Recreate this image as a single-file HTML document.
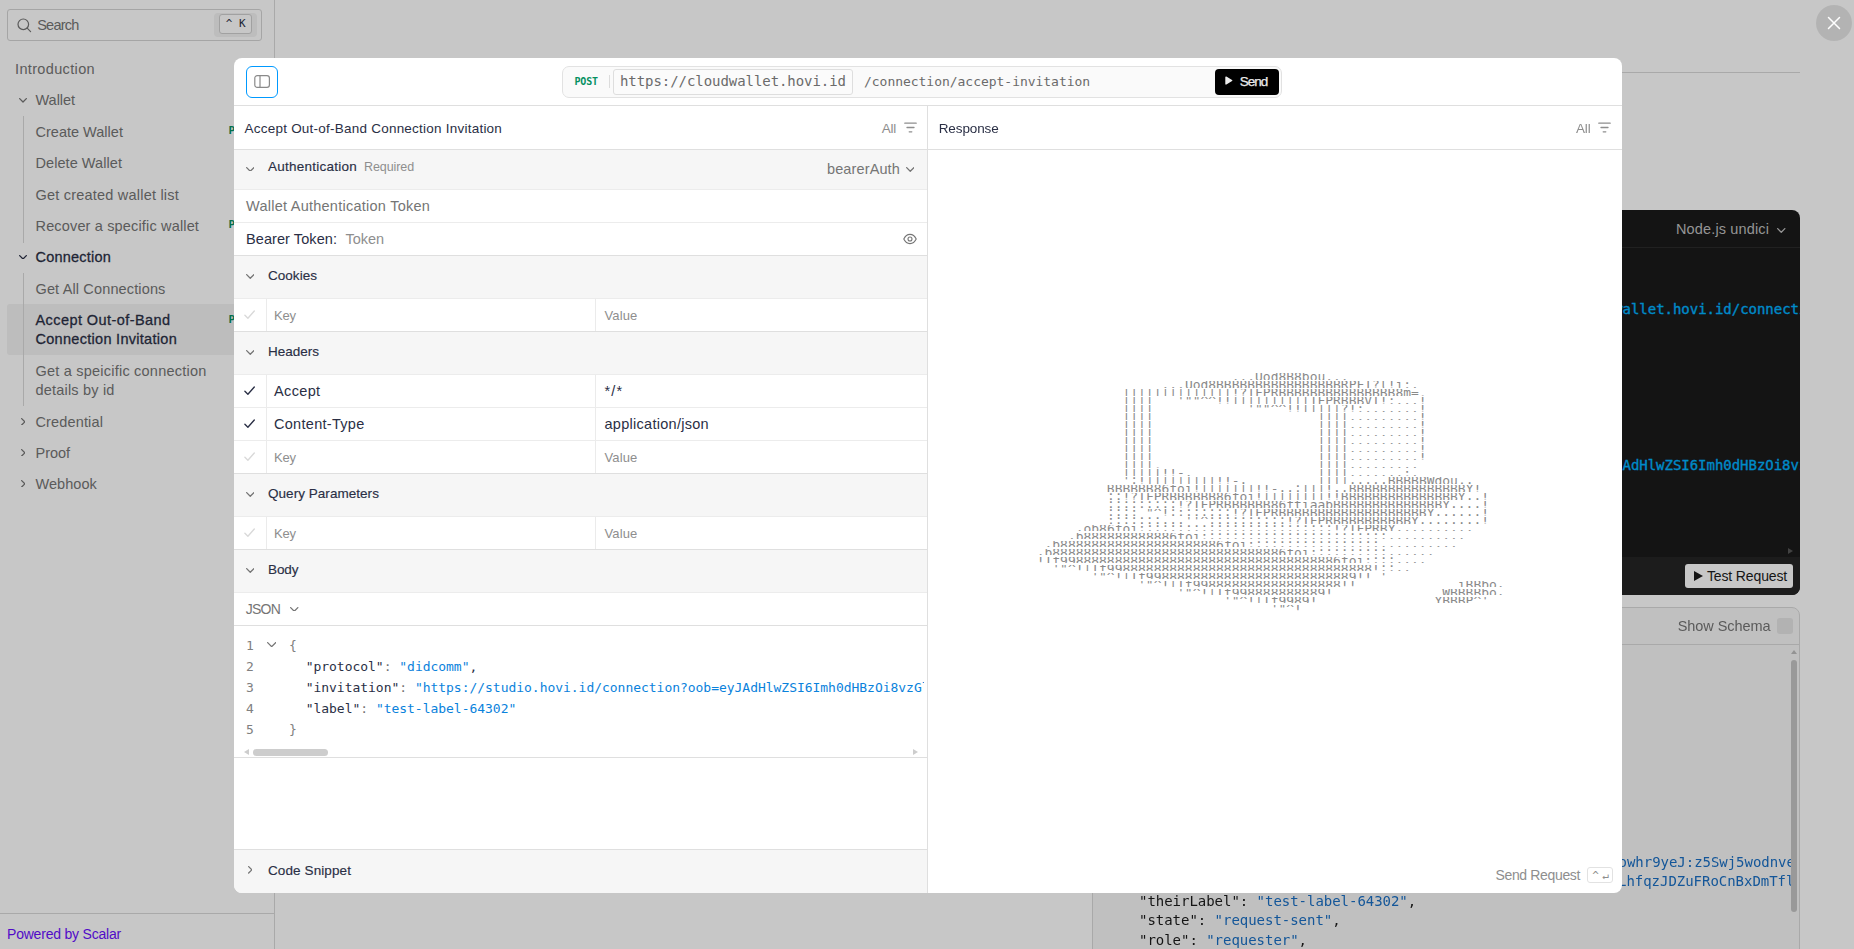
<!DOCTYPE html>
<html lang="en">
<head>
<meta charset="utf-8">
<title>Hovi Cloud Wallet API – Accept Out-of-Band Connection Invitation</title>
<style>
*{box-sizing:border-box;margin:0;padding:0}
html,body{width:1854px;height:949px;overflow:hidden;background:#fff}
body{font-family:"Liberation Sans",sans-serif;color:#2a2f45;font-size:14px;position:relative}
.mono{font-family:"DejaVu Sans Mono","Liberation Mono",monospace}
svg{display:block}
i{font-style:normal;display:block;position:absolute}
.abs{position:absolute}
.t{position:absolute;white-space:pre;text-decoration:none}
.med{color:#2a2f45!important;-webkit-text-stroke:.28px #2a2f45}
.cstroke{-webkit-text-stroke:.35px #00b2ff}
.semi{-webkit-text-stroke:.25px #ececec}
.semi2{-webkit-text-stroke:.15px #2a2f45}
/* underlying page */
.page{position:absolute;left:0;top:0;width:1854px;height:949px;background:#fff}
.sidebar{position:absolute;left:0;top:0;width:275px;height:949px;border-right:1px solid #d9d9d9;background:#fff}
.search{position:absolute;left:7px;top:9px;width:255px;height:32px;border:1px solid #d4d4d4;border-radius:3px;background:#fff}
.search .ico{position:absolute;left:8.8px;top:7.7px}
.search .kbd{position:absolute;left:206.3px;top:2.8px;width:43px;height:24px;background:#f3f3f3;border-radius:4px}
.search .kbd i{left:5px;top:1.5px;width:33px;height:20px;border:1px solid #cfcfcf;border-radius:3px;background:#fff;font-size:11px;color:#2a2f45;line-height:18px;text-align:center;font-family:"DejaVu Sans Mono","Liberation Mono",monospace;white-space:pre}
.nav{position:absolute;left:0;top:0;width:274px;height:520px;color:#757575}
.nav .active{position:absolute;left:7px;top:304px;width:260px;height:51px;background:#f2f2f2;border-radius:3px}
.nav .vline{left:23px;width:1px;background:#d9d9d9}
.nav .post{position:absolute;left:228.6px;font:bold 11px/13px "DejaVu Sans Mono","Liberation Mono",monospace;color:#069061;white-space:nowrap}
.sfoot{position:absolute;left:0;top:913px;width:274px;height:36px;border-top:1px solid #d9d9d9}
.content{position:absolute;left:275px;top:0;width:1579px;height:949px}
.content .rule{position:absolute;left:817px;top:72px;width:708px;height:1px;background:#d9d9d9}
.darkcard{position:absolute;left:817px;top:210px;width:708px;height:385px;background:#1a1a1a;border-radius:8px;overflow:hidden}
.darkcard .hd{position:absolute;left:0;top:0;width:100%;height:38px;border-bottom:1px solid #2b2b2b}
.darkcard .ft{position:absolute;left:0;top:347px;width:100%;height:38px;background:#242424}
.darkcard .tri{width:0;height:0;border-left:5px solid #555;border-top:3.5px solid transparent;border-bottom:3.5px solid transparent}
.testbtn{position:absolute;left:593px;top:354px;width:108px;height:24px;background:#fff;border-radius:3px}
.respcard{will-change:transform;position:absolute;left:817px;top:607px;width:708px;height:360px;background:#f6f6f6;border:1px solid #d9d9d9;border-radius:8px}
.respcard .hd{position:absolute;left:0;top:0;width:100%;height:37px;border-bottom:1px solid #d9d9d9}
.respcard .cbx{left:684px;top:10px;width:16px;height:16px;background:#e4e4e4;border-radius:3px}
.respcard .codeclip{position:absolute;left:0;top:38px;width:697.5px;height:320px;overflow:hidden}
.respcard .codeclip .t{margin-top:-38px}
.respcard .sarrow{left:697.5px;top:42px;width:0;height:0;border-bottom:4.5px solid #bdbdbd;border-left:3.5px solid transparent;border-right:3.5px solid transparent}
.respcard .sthumb{left:697.6px;top:52px;width:6px;height:252px;border-radius:3px;background:#c4c4c4}
/* overlay */
.overlay{position:absolute;left:0;top:0;width:1854px;height:949px;background:rgba(0,0,0,.22)}
.close{position:absolute;left:1815.6px;top:5px;width:36px;height:36px;border-radius:50%;background:rgba(0,0,0,.1);border:0}
.close svg{position:absolute;left:11px;top:11px}
/* modal */
.minner{position:absolute;left:.5px;top:.5px;width:1389px;height:835px}
.modal{position:absolute;left:233.5px;top:57.5px;width:1388.7px;height:835.2px;background:#fff;border-radius:8px;overflow:hidden}
.mhead{position:absolute;left:0;top:0;width:100%;height:48px;border-bottom:1px solid #dfdfdf}
.togg{position:absolute;left:12px;top:8px;width:32px;height:32px;border:1px solid #0099ff;border-radius:6px;background:#fff}
.togg svg{position:absolute;left:6.5px;top:7.9px}
.addr{position:absolute;left:328px;top:8px;width:720px;height:32px;border:1px solid #e2e2e2;border-radius:7px;background:#fafafa}
.addr .div{left:46px;top:8px;width:1px;height:13px;background:#dcdcdc}
.addr .srv{position:absolute;left:50px;top:1.6px;width:240px;height:26.6px;border:1px solid #dedede;border-radius:3px;background:#fbfbfb}
.addr .sendbtn{position:absolute;left:652px;top:2px;width:63.6px;height:26px;background:#000;border-radius:4px}
.left{position:absolute;left:0;top:48px;width:694px;height:787px;border-right:1px solid #dfdfdf}
.right{position:absolute;left:694px;top:48px;width:695px;height:787px}
.row{position:absolute;left:0;width:693px;border-bottom:1px solid #ececec;background:#fff}
.row.pre{border-bottom-color:#dfdfdf}
.row.sec{background:#f6f6f6}
.row.snip{border-bottom:0;border-top:1px solid #dfdfdf}
.row .vs{top:0;width:1px;height:100%;background:#ebebeb}
.editor{position:absolute;left:0;top:520px;width:693px;height:132px;border-bottom:1px solid #dfdfdf;overflow:hidden}
.editor .edclip{position:absolute;left:0;top:0;width:689.5px;height:120px;overflow:hidden}
.editor .hl{left:9.5px;top:122.5px;width:0;height:0;border-right:5px solid #cdcdcd;border-top:3.5px solid transparent;border-bottom:3.5px solid transparent}
.editor .hr{left:678.5px;top:122.5px;width:0;height:0;border-left:5px solid #cdcdcd;border-top:3.5px solid transparent;border-bottom:3.5px solid transparent}
.editor .hthumb{left:19px;top:123px;width:75px;height:6.5px;border-radius:3.5px;background:#cdcdcd}
.rhead{position:absolute;left:0;top:0;width:100%;height:44px;border-bottom:1px solid #dfdfdf}
.art{position:absolute;color:#8a8a8a;font-size:12.96px}
.art .ln{white-space:pre;height:6.6px;margin-bottom:1.4px;line-height:7.7px;overflow:hidden}
.art .d{position:relative;top:-.5px}
.kbd2{position:absolute;left:658.7px;top:760.6px;width:26.6px;height:16.6px;border:1px solid #e2e2e2;border-radius:3px;font-size:11px;letter-spacing:-1.5px;line-height:15px;text-align:center;color:#8e8e8e;white-space:pre}

.art{left:108.70000000000005px;top:267.2px}
</style>
</head>
<body>
<div class="page">
  <aside class="sidebar">
    <div class="search">
      <svg class="ico" width="15" height="15" viewBox="0 0 15 15" fill="none" stroke="#757575" stroke-width="1.2"><circle cx="6.3" cy="6.3" r="5.3"/><path d="M10.2 10.2 13.6 13.6" stroke-linecap="round"/></svg>
      <span class="t" style="left:29.2px;top:6.2px;font-size:14.5px;line-height:19px;letter-spacing:-0.74px;color:#757575">Search</span>
      <span class="kbd"><i>^ K</i></span>
    </div>
    <nav class="nav">
      <div class="active"></div>
      <i class="vline" style="top:116px;height:127px"></i>
      <i class="vline" style="top:273px;height:133px"></i>
      <svg class="abs" style="left:19px;top:98.3px" width="8" height="4.65" viewBox="0 0 8 4.65" fill="none" stroke="#757575" stroke-width="1.3" stroke-linecap="round" stroke-linejoin="round"><path d="M.65 .65l3.35 3.35 3.35-3.35"/></svg>
      <svg class="abs" style="left:19px;top:254.8px" width="8" height="4.65" viewBox="0 0 8 4.65" fill="none" stroke="#2a2f45" stroke-width="1.3" stroke-linecap="round" stroke-linejoin="round"><path d="M.65 .65l3.35 3.35 3.35-3.35"/></svg>
      <svg class="abs" style="left:20.7px;top:417.5px" width="4.5" height="7.7" viewBox="0 0 4.5 7.7" fill="none" stroke="#757575" stroke-width="1.3" stroke-linecap="round" stroke-linejoin="round"><path d="M.65 .65l3.2 3.2-3.2 3.2"/></svg>
      <svg class="abs" style="left:20.7px;top:448.5px" width="4.5" height="7.7" viewBox="0 0 4.5 7.7" fill="none" stroke="#757575" stroke-width="1.3" stroke-linecap="round" stroke-linejoin="round"><path d="M.65 .65l3.2 3.2-3.2 3.2"/></svg>
      <svg class="abs" style="left:20.7px;top:479.5px" width="4.5" height="7.7" viewBox="0 0 4.5 7.7" fill="none" stroke="#757575" stroke-width="1.3" stroke-linecap="round" stroke-linejoin="round"><path d="M.65 .65l3.2 3.2-3.2 3.2"/></svg>
      <span class="t l1" style="left:15px;top:60.0px;font-size:14.5px;line-height:19px;letter-spacing:0.35px;">Introduction</span>
      <span class="t" style="left:35.5px;top:91.0px;font-size:14.5px;line-height:19px;letter-spacing:-0.04px;">Wallet</span>
      <span class="t" style="left:35.5px;top:123.0px;font-size:14.5px;line-height:19px;letter-spacing:0.01px;">Create Wallet</span>
      <span class="t" style="left:35.5px;top:153.5px;font-size:14.5px;line-height:19px;letter-spacing:0.06px;">Delete Wallet</span>
      <span class="t" style="left:35.5px;top:186.0px;font-size:14.5px;line-height:19px;letter-spacing:0.21px;">Get created wallet list</span>
      <span class="t" style="left:35.5px;top:216.5px;font-size:14.5px;line-height:19px;letter-spacing:0.16px;">Recover a specific wallet</span>
      <span class="t med" style="left:35.5px;top:247.5px;font-size:14.5px;line-height:19px;letter-spacing:0.21px;">Connection</span>
      <span class="t" style="left:35.5px;top:279.5px;font-size:14.5px;line-height:19px;letter-spacing:0.14px;">Get All Connections</span>
      <span class="t med" style="left:35.5px;top:310.5px;font-size:14.5px;line-height:19px;letter-spacing:0.43px;">Accept Out-of-Band</span>
      <span class="t med" style="left:35.5px;top:329.5px;font-size:14.5px;line-height:19px;letter-spacing:0.29px;">Connection Invitation</span>
      <span class="t" style="left:35.5px;top:361.5px;font-size:14.5px;line-height:19px;letter-spacing:0.22px;">Get a speicific connection</span>
      <span class="t" style="left:35.5px;top:380.5px;font-size:14.5px;line-height:19px;letter-spacing:0.19px;">details by id</span>
      <span class="t" style="left:35.5px;top:412.5px;font-size:14.5px;line-height:19px;letter-spacing:0.14px;">Credential</span>
      <span class="t" style="left:35.5px;top:443.5px;font-size:14.5px;line-height:19px;letter-spacing:-0.03px;">Proof</span>
      <span class="t" style="left:35.5px;top:474.5px;font-size:14.5px;line-height:19px;letter-spacing:0.04px;">Webhook</span>
      <b class="post" style="top:123.6px">POST</b>
      <b class="post" style="top:218.1px">POST</b>
      <b class="post" style="top:312.9px">POST</b>
    </nav>
    <div class="sfoot"><a class="t" style="left:7px;top:11.1px;font-size:14px;line-height:18px;letter-spacing:-0.21px;color:#6a0fff">Powered by Scalar</a></div>
  </aside>
  <main class="content">
    <div class="rule"></div>
    <section class="darkcard">
      <div class="hd"></div>
      <span class="t" style="left:584px;top:9.5px;font-size:14.5px;line-height:19px;letter-spacing:0.14px;color:#bfbfbf">Node.js undici</span>
      <svg class="abs" style="left:685px;top:18px" width="8.5" height="4.9" viewBox="0 0 8.5 4.9" fill="none" stroke="#bfbfbf" stroke-width="1.3" stroke-linecap="round" stroke-linejoin="round"><path d="M.65 .65l3.6 3.6 3.6-3.6"/></svg>
      <span class="t mono cstroke" style="left:387.8px;top:89.9px;font-size:14px;line-height:18px;letter-spacing:-0.03px;color:#00b2ff">  'https://cloudwallet.hovi.id/connection/accept-invitation',</span>
      <span class="t mono cstroke" style="left:43.4px;top:245.7px;font-size:14px;line-height:18px;letter-spacing:-0.03px;color:#00b2ff">    invitation: 'https://studio.hovi.id/connection?oob=eyJAdHlwZSI6Imh0dHBzOi8vzGlkY29tbS5vcmcvb3V0LW9mLWJhbmQ</span>
      <i class="tri" style="left:696px;top:338px"></i>
      <div class="ft"></div>
      <div class="testbtn"><svg class="abs" style="left:9px;top:7px" width="9" height="10" viewBox="0 0 9 10"><path d="M0 0l9 5-9 5z" fill="#1b1b1b"/></svg></div>
      <span class="t" style="left:615px;top:357.1px;font-size:14px;line-height:18px;letter-spacing:-0.14px;color:#1b1b1b">Test Request</span>
    </section>
    <section class="respcard">
      <div class="hd"></div>
      <span class="t" style="left:584.7px;top:8.7px;font-size:14.5px;line-height:19px;letter-spacing:-0.05px;color:#757575">Show Schema</span>
      <i class="cbx"></i>
      <div class="codeclip">
      <span class="t mono" style="left:223.2px;top:245.2px;font-size:14px;line-height:18px;letter-spacing:-0.03px;color:#1a6fc4">"theirDid": "did:peer:1zQmSRrxwDgPSbowhr9yeJ:z5Swj5wodnve6K8fVz2mPQx7RtYcN3"</span>
      <span class="t mono" style="left:-138.5px;top:263.9px;font-size:14px;line-height:18px;letter-spacing:-0.03px;color:#1a6fc4">"invitationDid": "did:peer:2.Vz6MkhaXgBZDvotDkL5257faiztiGiC2QtKLGpbnnEGta2doK.LhfqzJDZuFRoCnBxDmTflX9aQ7mK2pWv8"</span>
      <span class="t mono" style="left:46px;top:283.9px;font-size:14px;line-height:18px;letter-spacing:-0.03px;color:#1b1b1b">"theirLabel":</span>
      <span class="t mono" style="left:163.6px;top:283.9px;font-size:14px;line-height:18px;letter-spacing:-0.03px;color:#1a6fc4">"test-label-64302"</span>
      <span class="t mono" style="left:314.8px;top:283.9px;font-size:14px;line-height:18px;color:#1b1b1b">,</span>
      <span class="t mono" style="left:46px;top:303.2px;font-size:14px;line-height:18px;letter-spacing:-0.03px;color:#1b1b1b">"state":</span>
      <span class="t mono" style="left:121.6px;top:303.2px;font-size:14px;line-height:18px;letter-spacing:-0.03px;color:#1a6fc4">"request-sent"</span>
      <span class="t mono" style="left:239.2px;top:303.2px;font-size:14px;line-height:18px;color:#1b1b1b">,</span>
      <span class="t mono" style="left:46px;top:323.2px;font-size:14px;line-height:18px;letter-spacing:-0.03px;color:#1b1b1b">"role":</span>
      <span class="t mono" style="left:113.2px;top:323.2px;font-size:14px;line-height:18px;letter-spacing:-0.03px;color:#1a6fc4">"requester"</span>
      <span class="t mono" style="left:205.6px;top:323.2px;font-size:14px;line-height:18px;color:#1b1b1b">,</span>
      </div>
      <i class="sarrow"></i>
      <i class="sthumb"></i>
    </section>
  </main>
</div>
<div class="overlay"></div>
<button class="close" aria-label="Close"><svg width="14" height="14" viewBox="0 0 14 14" fill="none" stroke="#fff" stroke-width="1.5" stroke-linecap="round"><path d="M1.5 1.5l11 11M12.5 1.5l-11 11"/></svg></button>
<div class="modal">
 <div class="minner">
  <header class="mhead">
    <button class="togg" aria-label="Toggle sidebar"><svg width="17" height="13" viewBox="0 0 17 13" fill="none" stroke="#8a8a8a" stroke-width="1.2"><rect x=".8" y=".7" width="14.6" height="11.7" rx="2.4"/><path d="M6 .7v11.7"/></svg></button>
    <div class="addr">
      <span class="t mono" style="left:11.5px;top:8.0px;font-size:10px;line-height:13px;letter-spacing:-0.15px;font-weight:bold;color:#069061">POST</span>
      <i class="div"></i>
      <div class="srv"></div>
      <span class="t mono" style="left:57px;top:5.2px;font-size:14px;line-height:18px;letter-spacing:-0.06px;color:#6b6b6b">https://cloudwallet.hovi.id</span>
      <span class="t mono" style="left:301px;top:6.0px;font-size:13px;line-height:17px;letter-spacing:-0.03px;color:#6b6b6b">/connection/accept-invitation</span>
      <div class="sendbtn"><svg class="abs" style="left:10px;top:7.4px" width="8" height="9" viewBox="0 0 8 9"><path d="M1 1.1l5.7 3.4-5.7 3.4z" fill="#ececec" stroke="#ececec" stroke-width="1.4" stroke-linejoin="round"/></svg></div>
      <span class="t semi" style="left:676.8px;top:6.0px;font-size:13.5px;line-height:18px;letter-spacing:-1.06px;color:#ececec">Send</span>
    </div>
  </header>
  <section class="left">
    <div class="row pre" style="top:0px;height:44px"></div>
    <span class="t" style="left:10.5px;top:14.1px;font-size:13.5px;line-height:18px;letter-spacing:0.23px;color:#2a2f45">Accept Out-of-Band Connection Invitation</span>
    <span class="t" style="left:647.7px;top:14.1px;font-size:13.5px;line-height:18px;letter-spacing:-0.17px;color:#8e8e8e">All</span>
    <svg class="abs" style="left:669.7px;top:15.799999999999997px" width="13" height="11" viewBox="0 0 13 11" fill="none" stroke="#8e8e8e" stroke-width="1.3" stroke-linecap="round"><path d="M.8 1.2h11.4M3 5.5h7M5.2 9.8h2.6"/></svg>
    <div class="row sec" style="top:44px;height:40px"></div>
    <svg class="abs" style="left:11.5px;top:60.5px" width="8.5" height="4.9" viewBox="0 0 8.5 4.9" fill="none" stroke="#757575" stroke-width="1.3" stroke-linecap="round" stroke-linejoin="round"><path d="M.65 .65l3.6 3.6 3.6-3.6"/></svg>
    <span class="t semi2" style="left:34px;top:52.0px;font-size:13.5px;line-height:18px;letter-spacing:0.25px;color:#2a2f45">Authentication</span>
    <span class="t" style="left:130px;top:52.7px;font-size:12.5px;line-height:16px;letter-spacing:-0.09px;color:#8e8e8e">Required</span>
    <span class="t" style="left:593px;top:53.7px;font-size:14.5px;line-height:19px;letter-spacing:0.12px;color:#757575">bearerAuth</span>
    <svg class="abs" style="left:671.5px;top:61px" width="8.5" height="4.9" viewBox="0 0 8.5 4.9" fill="none" stroke="#757575" stroke-width="1.3" stroke-linecap="round" stroke-linejoin="round"><path d="M.65 .65l3.6 3.6 3.6-3.6"/></svg>
    <div class="row " style="top:84px;height:33px"></div>
    <span class="t" style="left:12px;top:90.5px;font-size:14.5px;line-height:19px;letter-spacing:0.25px;color:#757575">Wallet Authentication Token</span>
    <div class="row pre" style="top:117px;height:33px"></div>
    <span class="t" style="left:12px;top:123.7px;font-size:14.5px;line-height:19px;letter-spacing:0.08px;color:#2a2f45">Bearer Token:</span>
    <span class="t" style="left:111.5px;top:123.7px;font-size:14.5px;line-height:19px;letter-spacing:-0.04px;color:#8e8e8e">Token</span>
    <svg class="abs" style="left:668.7px;top:127px" width="14" height="12" viewBox="0 0 14 12" fill="none" stroke="#757575" stroke-width="1.1"><path d="M.8 6C2.2 3 4.4 1.4 7 1.4S11.8 3 13.2 6C11.8 9 9.6 10.6 7 10.6S2.2 9 .8 6z"/><circle cx="7" cy="6" r="2"/></svg>
    <div class="row sec" style="top:150px;height:43px"></div>
    <svg class="abs" style="left:11.5px;top:168px" width="8.5" height="4.9" viewBox="0 0 8.5 4.9" fill="none" stroke="#757575" stroke-width="1.3" stroke-linecap="round" stroke-linejoin="round"><path d="M.65 .65l3.6 3.6 3.6-3.6"/></svg>
    <span class="t semi2" style="left:34px;top:161.0px;font-size:13.5px;line-height:18px;letter-spacing:0.03px;color:#2a2f45">Cookies</span>
    <div class="row kv pre" style="top:193px;height:33px"><svg class="abs" style="left:10.199999999999989px;top:11.300000000000011px" width="12" height="10" viewBox="0 0 12 10" fill="none" stroke="#d9d9d9" stroke-width="1.35" stroke-linecap="round" stroke-linejoin="round"><path d="M.9 5.2l3 3L10.3 1"/></svg><i class="vs" style="left:32px"></i><i class="vs" style="left:361px"></i></div>
    <span class="t" style="left:40px;top:201.0px;font-size:13px;line-height:17px;letter-spacing:-0.14px;color:#8e8e8e">Key</span>
      <span class="t" style="left:370.5px;top:201.0px;font-size:13px;line-height:17px;letter-spacing:0.14px;color:#8e8e8e">Value</span>
    <div class="row sec" style="top:226px;height:43px"></div>
    <svg class="abs" style="left:11.5px;top:244px" width="8.5" height="4.9" viewBox="0 0 8.5 4.9" fill="none" stroke="#757575" stroke-width="1.3" stroke-linecap="round" stroke-linejoin="round"><path d="M.65 .65l3.6 3.6 3.6-3.6"/></svg>
    <span class="t semi2" style="left:34px;top:237.0px;font-size:13.5px;line-height:18px;letter-spacing:-0.00px;color:#2a2f45">Headers</span>
    <div class="row kv" style="top:269px;height:33px"><svg class="abs" style="left:10.199999999999989px;top:11.300000000000011px" width="12" height="10" viewBox="0 0 12 10" fill="none" stroke="#2a2f45" stroke-width="1.35" stroke-linecap="round" stroke-linejoin="round"><path d="M.9 5.2l3 3L10.3 1"/></svg><i class="vs" style="left:32px"></i><i class="vs" style="left:361px"></i></div>
    <span class="t" style="left:40px;top:275.5px;font-size:14.5px;line-height:19px;letter-spacing:0.36px;color:#2a2f45">Accept</span>
      <span class="t" style="left:370.5px;top:275.5px;font-size:14.5px;line-height:19px;letter-spacing:1.22px;color:#2a2f45">*/*</span>
    <div class="row kv" style="top:302px;height:33px"><svg class="abs" style="left:10.199999999999989px;top:11.300000000000011px" width="12" height="10" viewBox="0 0 12 10" fill="none" stroke="#2a2f45" stroke-width="1.35" stroke-linecap="round" stroke-linejoin="round"><path d="M.9 5.2l3 3L10.3 1"/></svg><i class="vs" style="left:32px"></i><i class="vs" style="left:361px"></i></div>
    <span class="t" style="left:40px;top:309.0px;font-size:14.5px;line-height:19px;letter-spacing:0.29px;color:#2a2f45">Content-Type</span>
      <span class="t" style="left:370.5px;top:309.0px;font-size:14.5px;line-height:19px;letter-spacing:0.28px;color:#2a2f45">application/json</span>
    <div class="row kv pre" style="top:335px;height:33px"><svg class="abs" style="left:10.199999999999989px;top:11.300000000000011px" width="12" height="10" viewBox="0 0 12 10" fill="none" stroke="#d9d9d9" stroke-width="1.35" stroke-linecap="round" stroke-linejoin="round"><path d="M.9 5.2l3 3L10.3 1"/></svg><i class="vs" style="left:32px"></i><i class="vs" style="left:361px"></i></div>
    <span class="t" style="left:40px;top:343.0px;font-size:13px;line-height:17px;letter-spacing:-0.14px;color:#8e8e8e">Key</span>
      <span class="t" style="left:370.5px;top:343.0px;font-size:13px;line-height:17px;letter-spacing:0.14px;color:#8e8e8e">Value</span>
    <div class="row sec" style="top:368px;height:43px"></div>
    <svg class="abs" style="left:11.5px;top:386px" width="8.5" height="4.9" viewBox="0 0 8.5 4.9" fill="none" stroke="#757575" stroke-width="1.3" stroke-linecap="round" stroke-linejoin="round"><path d="M.65 .65l3.6 3.6 3.6-3.6"/></svg>
    <span class="t semi2" style="left:34px;top:379.0px;font-size:13.5px;line-height:18px;letter-spacing:0.04px;color:#2a2f45">Query Parameters</span>
    <div class="row kv pre" style="top:411px;height:33px"><svg class="abs" style="left:10.199999999999989px;top:11.299999999999955px" width="12" height="10" viewBox="0 0 12 10" fill="none" stroke="#d9d9d9" stroke-width="1.35" stroke-linecap="round" stroke-linejoin="round"><path d="M.9 5.2l3 3L10.3 1"/></svg><i class="vs" style="left:32px"></i><i class="vs" style="left:361px"></i></div>
    <span class="t" style="left:40px;top:419.0px;font-size:13px;line-height:17px;letter-spacing:-0.14px;color:#8e8e8e">Key</span>
      <span class="t" style="left:370.5px;top:419.0px;font-size:13px;line-height:17px;letter-spacing:0.14px;color:#8e8e8e">Value</span>
    <div class="row sec" style="top:444px;height:43px"></div>
    <svg class="abs" style="left:11.5px;top:462px" width="8.5" height="4.9" viewBox="0 0 8.5 4.9" fill="none" stroke="#757575" stroke-width="1.3" stroke-linecap="round" stroke-linejoin="round"><path d="M.65 .65l3.6 3.6 3.6-3.6"/></svg>
    <span class="t semi2" style="left:34px;top:454.7px;font-size:13.5px;line-height:18px;letter-spacing:-0.07px;color:#2a2f45">Body</span>
    <div class="row pre" style="top:487px;height:33px"></div>
    <span class="t" style="left:11.7px;top:494.1px;font-size:14px;line-height:18px;letter-spacing:-0.76px;color:#757575">JSON</span>
    <svg class="abs" style="left:56px;top:500.5px" width="8.5" height="4.9" viewBox="0 0 8.5 4.9" fill="none" stroke="#757575" stroke-width="1.3" stroke-linecap="round" stroke-linejoin="round"><path d="M.65 .65l3.6 3.6 3.6-3.6"/></svg>
    <div class="editor">
      <div class="edclip">
      <span class="t mono" style="left:12px;top:10.5px;font-size:13px;line-height:17px;letter-spacing:-0.03px;color:#808080">1</span>
      <span class="t mono" style="left:12px;top:31.5px;font-size:13px;line-height:17px;letter-spacing:-0.03px;color:#808080">2</span>
      <span class="t mono" style="left:12px;top:52.5px;font-size:13px;line-height:17px;letter-spacing:-0.03px;color:#808080">3</span>
      <span class="t mono" style="left:12px;top:73.5px;font-size:13px;line-height:17px;letter-spacing:-0.03px;color:#808080">4</span>
      <span class="t mono" style="left:12px;top:94.7px;font-size:13px;line-height:17px;letter-spacing:-0.03px;color:#808080">5</span>
      <svg class="abs" style="left:32.7px;top:16.2px" width="9.3" height="5.3" viewBox="0 0 9.3 5.3" fill="none" stroke="#757575" stroke-width="1.3" stroke-linecap="round" stroke-linejoin="round"><path d="M.65 .65l4 4 4-4"/></svg>
      <span class="t mono" style="left:55px;top:10.5px;font-size:13px;line-height:17px;letter-spacing:-0.03px;color:#808080">{</span>
      <span class="t mono" style="left:71.7px;top:31.5px;font-size:13px;line-height:17px;letter-spacing:-0.03px;color:#2a2f45">"protocol"</span>
      <span class="t mono" style="left:149.7px;top:31.5px;font-size:13px;line-height:17px;letter-spacing:-0.03px;color:#757575">:</span>
      <span class="t mono" style="left:165.3px;top:31.5px;font-size:13px;line-height:17px;letter-spacing:-0.03px;color:#0a82dc">"didcomm"</span>
      <span class="t mono" style="left:235.5px;top:31.5px;font-size:13px;line-height:17px;letter-spacing:-0.03px;color:#2a2f45">,</span>
      <span class="t mono" style="left:71.7px;top:52.5px;font-size:13px;line-height:17px;letter-spacing:-0.03px;color:#2a2f45">"invitation"</span>
      <span class="t mono" style="left:165.3px;top:52.5px;font-size:13px;line-height:17px;letter-spacing:-0.03px;color:#757575">:</span>
      <span class="t mono" style="left:180.9px;top:52.5px;font-size:13px;line-height:17px;letter-spacing:-0.03px;color:#0a82dc">"https://studio.hovi.id/connection?oob=eyJAdHlwZSI6Imh0dHBzOi8vzGlkY29tbS5vcmcvb3V0LW9mLWJhbmQ"</span>
      <span class="t mono" style="left:71.7px;top:73.5px;font-size:13px;line-height:17px;letter-spacing:-0.03px;color:#2a2f45">"label"</span>
      <span class="t mono" style="left:126.3px;top:73.5px;font-size:13px;line-height:17px;letter-spacing:-0.03px;color:#757575">:</span>
      <span class="t mono" style="left:141.9px;top:73.5px;font-size:13px;line-height:17px;letter-spacing:-0.03px;color:#0a82dc">"test-label-64302"</span>
      <span class="t mono" style="left:55px;top:94.7px;font-size:13px;line-height:17px;letter-spacing:-0.03px;color:#808080">}</span>
      </div>
      <i class="hl"></i><i class="hthumb"></i><i class="hr"></i>
    </div>
    <div class="row sec snip" style="top:743px;height:44px"></div>
    <svg class="abs" style="left:13.5px;top:760px" width="4.5" height="7.7" viewBox="0 0 4.5 7.7" fill="none" stroke="#757575" stroke-width="1.3" stroke-linecap="round" stroke-linejoin="round"><path d="M.65 .65l3.2 3.2-3.2 3.2"/></svg>
    <span class="t semi2" style="left:34px;top:755.5px;font-size:13.5px;line-height:18px;letter-spacing:0.10px;color:#2a2f45">Code Snippet</span>
  </section>
  <section class="right">
    <div class="rhead"></div>
    <span class="t" style="left:10.7px;top:14.1px;font-size:13.5px;line-height:18px;letter-spacing:-0.10px;color:#2a2f45">Response</span>
    <span class="t" style="left:648px;top:14.1px;font-size:13.5px;line-height:18px;letter-spacing:-0.17px;color:#8e8e8e">All</span>
    <svg class="abs" style="left:670.3px;top:15.799999999999997px" width="13" height="11" viewBox="0 0 13 11" fill="none" stroke="#8e8e8e" stroke-width="1.3" stroke-linecap="round"><path d="M.8 1.2h11.4M3 5.5h7M5.2 9.8h2.6"/></svg>
    <div class="art mono">
<div class="ln">                         <span class="d">...</span>Uod8B8bou<span class="d">...</span></div>
<div class="ln">                <span class="d">...</span>Uod8BBBBBBBBBBBBBBBBRPFT?l!i<span class="d">:.</span></div>
<div class="ln">           ||||||||||||||!?TFPRBBBBBBBBBBBBBBB8m=<span class="d">,</span></div>
<div class="ln">           ||||   '""^^!!||||||||||TFPRBBBVT!<span class="d">:...</span>!</div>
<div class="ln">           ||||            '""^^!!|||||?!<span class="d">:.......</span>!</div>
<div class="ln">           ||||                     ||||<span class="d">.........</span>!</div>
<div class="ln">           ||||                     ||||<span class="d">.........</span>!</div>
<div class="ln">           ||||                     ||||<span class="d">.........</span>!</div>
<div class="ln">           ||||                     ||||<span class="d">.........</span>!</div>
<div class="ln">           ||||                     ||||<span class="d">.........</span>!</div>
<div class="ln">           ||||                     ||||<span class="d">.........</span>!</div>
<div class="ln">           ||||<span class="d">,</span>                    ||||<span class="d">.........</span>`</div>
<div class="ln">           |||||!!-<span class="d">.</span>_               ||||<span class="d">.......;.</span></div>
<div class="ln">           '<span class="d">:</span>!|||||||||!!-<span class="d">.</span>_        ||||<span class="d">.....</span>BBBBBWdou<span class="d">,.</span></div>
<div class="ln">         BBBBBB86foi!|||||||!!-<span class="d">..:</span>|||!<span class="d">..</span>BBBBBBBBBBBBBBBY!</div>
<div class="ln">         <span class="d">::</span>!?TFPRBBBBBB86foi!||||||||!!BBBBBBBBBBBBBBBY<span class="d">..</span>!</div>
<div class="ln">         <span class="d">:::::::::</span>!?TFPRBBBBBB86ftiaabBBBBBBBBBBBBBBY<span class="d">....</span>!</div>
<div class="ln">         <span class="d">:::;</span>`"^!<span class="d">:;::::::</span>!?TFPRBBBBBBBBBBBBBBBBBBBY<span class="d">......</span>!</div>
<div class="ln">         <span class="d">;::::::...</span>''^<span class="d">::::::::::</span>!?TFPRBBBBBBBBBBY<span class="d">........</span>!</div>
<div class="ln">     <span class="d">.</span>ob86foi<span class="d">;::::::::::::::::::::::::</span>!?TFPRBY<span class="d">..........</span>`</div>
<div class="ln">    <span class="d">.</span>b888888888886foi<span class="d">;:::::::::::::::::::::::..........</span>`</div>
<div class="ln"> <span class="d">.</span>b888888888888888888886foi<span class="d">;::::::::::::::::..........</span>`</div>
<div class="ln"><span class="d">.</span>b888888888888888888888888888886foi<span class="d">;:::::::::......</span>`</div>
<div class="ln">!Tf998888888888888888888888888888888886foi<span class="d">;:::....</span>`</div>
<div class="ln">  '"^!|Tf9988888888888888888888888888888888!<span class="d">::..</span>`</div>
<div class="ln">       '"^!|Tf998888888888888888888888889!! '`</div>
<div class="ln">             '"^!|Tf9988888888888888888!!`            iBBbo<span class="d">.</span></div>
<div class="ln">                  '"^!|Tf998888888889!`             WBBBBbo<span class="d">.</span></div>
<div class="ln">                        '"^!|Tf9989!`              YBBBP^'</div>
<div class="ln">                              '"^!`               `</div>
    </div>
    <span class="t" style="left:567.5px;top:759.9px;font-size:14px;line-height:18px;letter-spacing:-0.35px;color:#8e8e8e">Send Request</span>
    <span class="kbd2 mono">^ ↵</span>
  </section>
 </div>
</div>
</body>
</html>
